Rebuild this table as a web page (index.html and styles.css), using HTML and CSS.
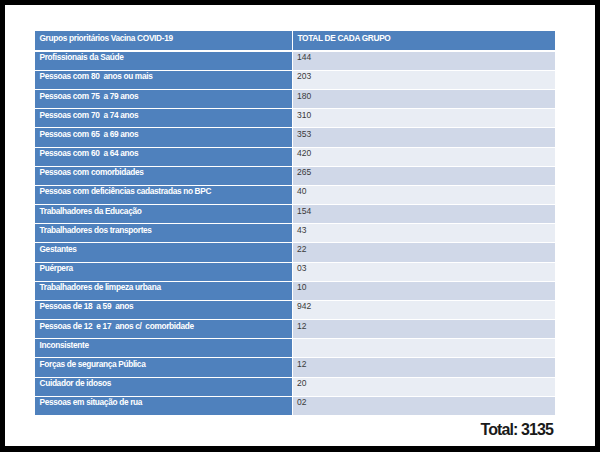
FILE: index.html
```html
<!DOCTYPE html>
<html lang="pt">
<head>
<meta charset="utf-8">
<title>Grupos prioritários Vacina COVID-19</title>
<link rel="stylesheet" href="styles.css">
</head>
<body>
<div class="frame">
  <div class="table">
    <div class="head">
      <div class="cell label">Grupos prioritários Vacina COVID-19</div>
      <div class="cell label">TOTAL DE CADA GRUPO</div>
    </div>
    <div class="body">
      <div class="cell label">Profissionais da Saúde</div><div class="cell val dark">144</div>
      <div class="cell label">Pessoas com 80&nbsp; anos ou mais</div><div class="cell val light">203</div>
      <div class="cell label">Pessoas com 75&nbsp; a 79 anos</div><div class="cell val dark">180</div>
      <div class="cell label">Pessoas com 70&nbsp; a 74 anos</div><div class="cell val light">310</div>
      <div class="cell label">Pessoas com 65&nbsp; a 69 anos</div><div class="cell val dark">353</div>
      <div class="cell label">Pessoas com 60&nbsp; a 64 anos</div><div class="cell val light">420</div>
      <div class="cell label">Pessoas com comorbidades</div><div class="cell val dark">265</div>
      <div class="cell label">Pessoas com deficiências cadastradas no BPC</div><div class="cell val light">40</div>
      <div class="cell label">Trabalhadores da Educação</div><div class="cell val dark">154</div>
      <div class="cell label">Trabalhadores dos transportes</div><div class="cell val light">43</div>
      <div class="cell label">Gestantes</div><div class="cell val dark">22</div>
      <div class="cell label">Puérpera</div><div class="cell val light">03</div>
      <div class="cell label">Trabalhadores de limpeza urbana</div><div class="cell val dark">10</div>
      <div class="cell label">Pessoas de 18&nbsp; a 59&nbsp; anos</div><div class="cell val light">942</div>
      <div class="cell label">Pessoas de 12&nbsp; e 17&nbsp; anos c/&nbsp; comorbidade</div><div class="cell val dark">12</div>
      <div class="cell label">Inconsistente</div><div class="cell val light"></div>
      <div class="cell label">Forças de segurança Pública</div><div class="cell val dark">12</div>
      <div class="cell label">Cuidador de idosos</div><div class="cell val light">20</div>
      <div class="cell label">Pessoas em situação de rua</div><div class="cell val dark">02</div>
    </div>
  </div>
  <div class="total">Total: 3135</div>
</div>
</body>
</html>
```
FILE: styles.css
```css
html, body {
  margin: 0;
  padding: 0;
  background: #000;
}
body {
  width: 600px;
  height: 452px;
  overflow: hidden;
}
.frame {
  margin: 5px 5px 0 5px;
  height: 441px;
  background: #fff;
  box-sizing: border-box;
  padding: 26px 40px 0 30px;
  font-family: "Liberation Sans", Arial, sans-serif;
}
.table {
  width: 520px;
}
.head {
  display: grid;
  grid-template-columns: 257px 262px;
  column-gap: 1px;
  height: 18.7px;
  margin-bottom: 2px;
}
.head .cell {
  padding-top: 2px;
}
.body {
  display: grid;
  grid-template-columns: 257px 262px;
  column-gap: 1px;
  row-gap: 1px;
  grid-auto-rows: 18.18px;
}
.cell {
  box-sizing: border-box;
  padding: 0.5px 0 0 4.5px;
  font-size: 8.3px;
  line-height: 10px;
  letter-spacing: -0.33px;
  white-space: nowrap;
  overflow: hidden;
}
.label {
  background: #4f81bd;
  color: #fff;
  font-weight: bold;
}
.val {
  color: #3a3a3a;
  padding-left: 4px;
  font-size: 8.5px;
  letter-spacing: 0;
}
.dark {
  background: #d0d8e8;
}
.light {
  background: #e9edf4;
}
.total {
  margin-top: 6px;
  padding-right: 2px;
  text-align: right;
  font-size: 16px;
  font-weight: bold;
  letter-spacing: -0.9px;
  color: #1a1a1a;
}
```
